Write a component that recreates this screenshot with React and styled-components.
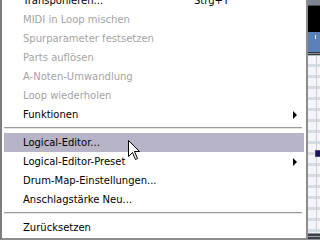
import styled, { createGlobalStyle } from 'styled-components';

const GlobalStyle = createGlobalStyle`
  html, body {
    margin: 0;
    padding: 0;
    width: 320px;
    height: 240px;
    overflow: hidden;
    background: #ffffff;
  }
`;

const items = [
  { label: 'Transponieren...', shortcut: 'Strg+T' },
  { label: 'MIDI in Loop mischen', disabled: true },
  { label: 'Spurparameter festsetzen', disabled: true },
  { label: 'Parts auflösen', disabled: true },
  { label: 'A-Noten-Umwandlung', disabled: true },
  { label: 'Loop wiederholen', disabled: true },
  { label: 'Funktionen', submenu: true },
  { separator: true },
  { label: 'Logical-Editor...', active: true },
  { label: 'Logical-Editor-Preset', submenu: true },
  { label: 'Drum-Map-Einstellungen...' },
  { label: 'Anschlagstärke Neu...' },
  { separator: true },
  { label: 'Zurücksetzen' },
];

const Screen = styled.div`
  position: relative;
  display: flex;
  width: 320px;
  height: 240px;
  overflow: hidden;
  font-family: 'DejaVu Sans', 'Liberation Sans', sans-serif;
  font-size: 10px;
`;

const Menu = styled.div`
  width: 300px;
  flex: none;
  margin-top: -9px;
  padding: 0 2px 1px 2px;
  background: #ffffff;
  border-left: 2px solid #7c7c7c;
  border-right: 2px solid #8c8c8c;
  border-bottom: 2px solid #8c8c8c;
  align-self: flex-start;
`;

const Item = styled.div`
  display: grid;
  grid-template-columns: 171px 1fr 4px;
  align-items: center;
  height: 19px;
  padding: 0 7px 0 19px;
  background: ${(p) => (p.$active ? '#b6b4c6' : 'transparent')};
  color: ${(p) => (p.$disabled ? '#a4a4a4' : '#000000')};
  white-space: nowrap;
`;

const Label = styled.span`
  line-height: 19px;
`;

const Shortcut = styled.span`
  line-height: 19px;
`;

const Arrow = styled.span`
  width: 0;
  height: 0;
  border-left: 4px solid #000000;
  border-top: 4px solid transparent;
  border-bottom: 4px solid transparent;
`;

const Separator = styled.div`
  height: 9px;
  display: flex;
  align-items: flex-start;
  padding-top: 3px;
  box-sizing: border-box;

  &::before {
    content: '';
    display: block;
    width: 298px;
    height: 1px;
    background: #9c9c9c;
    border-bottom: 1px solid #e4e4e4;
  }
`;

const Arrange = styled.div`
  flex: 1;
  display: flex;
  flex-direction: column;
  background: #eef0f3;
`;

const TitleBar = styled.div`
  height: 5px;
  background: #7e858e;
  border-bottom: 1px solid #4a4f56;
`;

const Transport = styled.div`
  height: 26px;
  background: #000000;
`;

const Ruler = styled.div`
  position: relative;
  height: 20px;
  background: #5a82b9;

  &::after {
    content: '';
    position: absolute;
    left: 7px;
    top: 3px;
    width: 1px;
    height: 4px;
    background: #e6eef8;
  }
`;

const RulerEdge = styled.div`
  height: 4px;
  background: linear-gradient(#30353c 0 1px, #8a9099 1px 2px, #30353c 2px 3px, #b8bdc4 3px);
`;

const Grid = styled.div`
  position: relative;
  flex: 1;
  background:
    linear-gradient(90deg, transparent 8px, #c9ced6 8px 9px, transparent 9px),
    repeating-linear-gradient(#f3f5f8 0 8px, #d6dae1 8px 11px);
`;

const Note = styled.div`
  position: absolute;
  left: 7px;
  top: 94px;
  width: 4px;
  height: 5px;
  background: #1b1452;
  border: 1px solid #4a4a86;
`;

const BottomBar = styled.div`
  height: 7px;
  background: linear-gradient(#8a9099 0 1px, #3c4148 1px 3px, #9aa0a8 3px 4px, #3c4148 4px 6px, #8a9099 6px);
`;

const Cursor = styled.svg`
  position: absolute;
  left: 128px;
  top: 140px;
  width: 13px;
  height: 21px;
`;

export default function App() {
  return (
    <>
      <GlobalStyle />
      <Screen>
        <Menu>
          {items.map((it, i) =>
            it.separator ? (
              <Separator key={i} />
            ) : (
              <Item key={i} $active={it.active} $disabled={it.disabled}>
                <Label>{it.label}</Label>
                <Shortcut>{it.shortcut || ''}</Shortcut>
                {it.submenu ? <Arrow /> : <span />}
              </Item>
            )
          )}
        </Menu>
        <Arrange>
          <TitleBar />
          <Transport />
          <Ruler />
          <RulerEdge />
          <Grid>
            <Note />
          </Grid>
          <BottomBar />
        </Arrange>
        <Cursor viewBox="0 0 13 21">
          <path
            d="M0.5 0.5 L0.5 16.5 L4.5 12.5 L7.5 19.5 L9.5 18.5 L6.5 11.5 L11.5 11.5 Z"
            fill="#ffffff"
            stroke="#000000"
            strokeWidth="1"
            strokeLinejoin="miter"
          />
        </Cursor>
      </Screen>
    </>
  );
}
